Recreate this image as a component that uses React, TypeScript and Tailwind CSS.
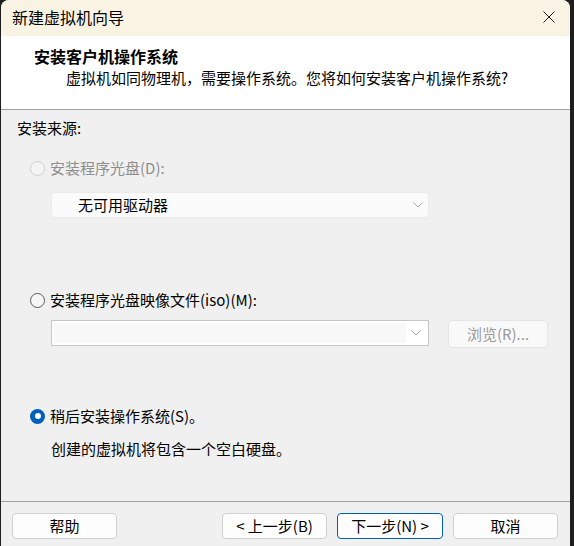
const font = { fontFamily: '"Noto Sans CJK SC", "Noto Sans", sans-serif' };

function Chevron() {
  return (
    <svg width="10" height="6" viewBox="0 0 10 6" className="shrink-0">
      <path d="M0.5 0.5 L5 5 L9.5 0.5" fill="none" stroke="#a6a6a6" strokeWidth="1" />
    </svg>
  );
}

function Radio({ state }: { state: 'disabled' | 'off' | 'on' }) {
  if (state === 'on') {
    return (
      <span className="w-[15px] h-[15px] rounded-full bg-[#005fb8] flex items-center justify-center shrink-0">
        <span className="w-[6px] h-[6px] rounded-full bg-white" />
      </span>
    );
  }
  return (
    <span
      className={
        state === 'disabled'
          ? 'w-[15px] h-[15px] rounded-full border border-[#cdcdcd] bg-[#f4f4f4] shrink-0'
          : 'w-[15px] h-[15px] rounded-full border border-[#5c5c5c] bg-[#f6f6f6] shrink-0'
      }
    />
  );
}

function Button({ label, primary }: { label: string; primary?: boolean }) {
  return (
    <button
      className={
        primary
          ? 'h-[26px] w-[106px] rounded-[4px] border border-[#005fb8] bg-[#fdfdfd] text-[15px] leading-[20px] text-black'
          : 'h-[26px] w-[105px] rounded-[4px] border border-[#d0d0d0] bg-[#fdfdfd] text-[15px] leading-[20px] text-black'
      }
    >
      {label}
    </button>
  );
}

export default function App() {
  return (
    <div className="w-[574px] h-[546px] bg-[#1e1e1e] flex overflow-hidden" style={font}>
      <div className="ml-[1px] w-[569px] h-full rounded-t-[8px] overflow-hidden flex flex-col bg-[#f0f0f0]">
        {/* title bar */}
        <div className="h-[36px] shrink-0 bg-[#f9f3e3] flex items-center justify-between pl-[11px] pr-[15px] pb-[2px]">
          <span className="text-[16px] leading-[20px] text-black">新建虚拟机向导</span>
          <svg width="12" height="12" viewBox="0 0 12 12">
            <path d="M0.5 0.5 L11.5 11.5 M11.5 0.5 L0.5 11.5" stroke="#1a1a1a" strokeWidth="1" />
          </svg>
        </div>

        {/* header */}
        <div className="h-[74px] shrink-0 bg-white border-b border-[#a0a0a0] pt-[10px]">
          <div className="pl-[33px] text-[16px] leading-[20px] font-bold text-black">安装客户机操作系统</div>
          <div className="pl-[65px] mt-[2px] text-[15px] leading-[20px] text-black">
            虚拟机如同物理机，需要操作系统。您将如何安装客户机操作系统?
          </div>
        </div>

        {/* body */}
        <div className="flex-1 pl-[16px] pt-[8px] flex flex-col text-[15px] leading-[20px] text-black">
          <div>安装来源:</div>

          <div className="mt-[20px] ml-[13px] h-[20px] flex items-center gap-[5px]">
            <Radio state="disabled" />
            <span className="text-[#8e8e8e]">安装程序光盘(D):</span>
          </div>
          <div className="mt-[14px] ml-[34px] w-[378px] h-[26px] rounded-[3px] border border-[#ebebeb] bg-[#fbfbfb] flex items-center justify-between pl-[26px] pr-[5px]">
            <span>无可用驱动器</span>
            <Chevron />
          </div>

          <div className="mt-[72px] ml-[13px] h-[20px] flex items-center gap-[5px]">
            <Radio state="off" />
            <span>安装程序光盘映像文件(iso)(M):</span>
          </div>
          <div className="mt-[10px] ml-[34px] flex items-start gap-[19px]">
            <div className="w-[378px] h-[26px] border border-[#c6c6c6] bg-white flex">
              <div className="flex-1 m-[2px] mr-0 bg-[#f8f8f8]" />
              <div className="w-[22px] flex items-center justify-center pr-[3px]">
                <Chevron />
              </div>
            </div>
            <button className="w-[100px] h-[28px] rounded-[4px] border border-[#e6e6e6] bg-[#f9f9f9] text-[#9b9b9b] text-[15px] leading-[20px]">
              浏览(R)...
            </button>
          </div>

          <div className="mt-[58px] ml-[13px] h-[20px] flex items-center gap-[5px]">
            <Radio state="on" />
            <span>稍后安装操作系统(S)。</span>
          </div>
          <div className="mt-[13px] ml-[34px]">创建的虚拟机将包含一个空白硬盘。</div>
        </div>

        {/* footer */}
        <div className="h-[45px] shrink-0 border-t border-[#a0a0a0] pt-[11px] pl-[11px] pr-[12px] flex items-start">
          <Button label="帮助" />
          <div className="flex-1" />
          <div className="flex gap-[10px]">
            <Button label="< 上一步(B)" />
            <Button label="下一步(N) >" primary />
            <Button label="取消" />
          </div>
        </div>
      </div>
    </div>
  );
}
